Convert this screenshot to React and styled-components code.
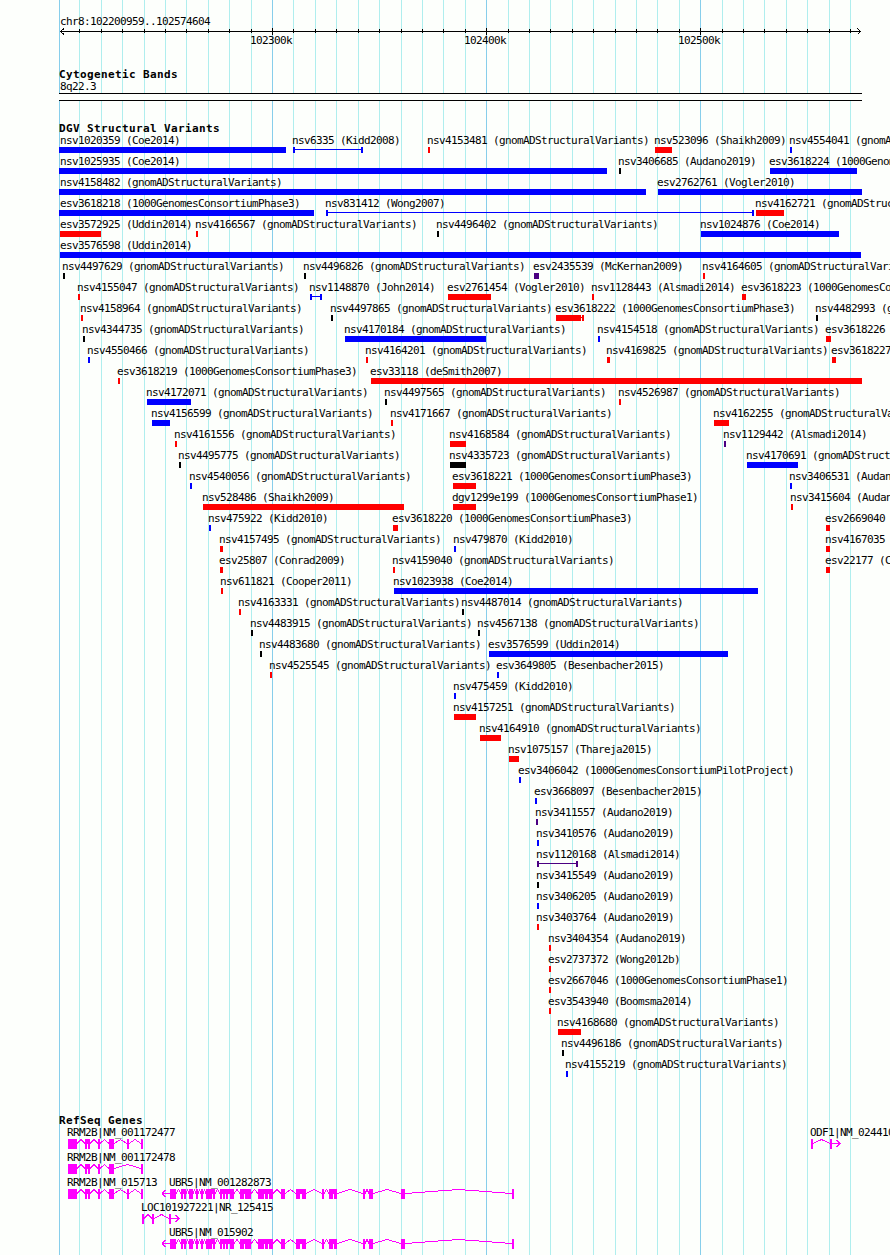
import React from "react";
import styled, { createGlobalStyle, css } from "styled-components";

const RED = "#ff0000";
const BLUE = "#0000ff";
const BLACK = "#000000";
const PURPLE = "#4b0082";
const GENE = "#ff00ff";

const GNOMAD = "gnomADStructuralVariants";
const PHASE1 = "1000GenomesConsortiumPhase1";
const PHASE3 = "1000GenomesConsortiumPhase3";
const PILOT = "1000GenomesConsortiumPilotProject";

const MAJOR = [59, 272, 486, 700];
const MINOR = [
	79, 101, 122, 144, 165, 186, 208, 229, 251, 293, 315, 336, 358, 379, 401, 422, 443, 465, 508,
	529, 550, 572, 593, 615, 636, 657, 679, 722, 743, 764, 786, 807, 829, 850
];

const rule = (color) => (x) => `linear-gradient(${color}, ${color}) ${x}px 0 / 1px 100% no-repeat`;
const gridLines = [...MAJOR.map(rule("#87ceeb")), ...MINOR.map(rule("#afeeee"))].join(", ");

// [name, study, start, end, color, kind, label start]
const variants = [
	[
		["nsv1020359", "Coe2014", 59, 286, BLUE, "bar", 61],
		["nsv6335", "Kidd2008", 293, 363, BLUE, "span"],
		["nsv4153481", GNOMAD, 428, 430, RED],
		["nsv523096", "Shaikh2009", 655, 672, RED],
		["nsv4554041", GNOMAD, 790, 792, BLUE]
	],
	[
		["nsv1025935", "Coe2014", 59, 607, BLUE, "bar", 61],
		["nsv3406685", "Audano2019", 619, 621, BLACK],
		["esv3618224", PHASE3, 770, 857, BLUE]
	],
	[
		["nsv4158482", GNOMAD, 59, 646, BLUE, "bar", 61],
		["esv2762761", "Vogler2010", 658, 862, BLUE]
	],
	[
		["esv3618218", PHASE3, 59, 314, BLUE, "bar", 61],
		["nsv831412", "Wong2007", 326, 754, BLUE, "span"],
		["nsv4162721", GNOMAD, 756, 784, RED]
	],
	[
		["esv3572925", "Uddin2014", 60, 101, RED, "bar", 61],
		["nsv4166567", GNOMAD, 196, 198, RED],
		["nsv4496402", GNOMAD, 437, 439, BLACK],
		["nsv1024876", "Coe2014", 701, 839, BLUE]
	],
	[["esv3576598", "Uddin2014", 60, 861, BLUE, "bar", 61]],
	[
		["nsv4497629", GNOMAD, 63, 65, BLACK],
		["nsv4496826", GNOMAD, 304, 306, BLACK],
		["esv2435539", "McKernan2009", 534, 539, PURPLE],
		["nsv4164605", GNOMAD, 703, 705, RED]
	],
	[
		["nsv4155047", GNOMAD, 78, 80, RED],
		["nsv1148870", "John2014", 310, 322, BLUE, "span"],
		["esv2761454", "Vogler2010", 448, 491, RED],
		["nsv1128443", "Alsmadi2014", 592, 594, RED],
		["esv3618223", PHASE3, 742, 746, RED]
	],
	[
		["nsv4158964", GNOMAD, 81, 83, RED],
		["nsv4497865", GNOMAD, 331, 333, BLACK],
		["esv3618222", PHASE3, 556, 584, RED, "split"],
		["nsv4482993", GNOMAD, 816, 818, BLACK]
	],
	[
		["nsv4344735", GNOMAD, 83, 85, BLACK],
		["nsv4170184", GNOMAD, 345, 486, BLUE],
		["nsv4154518", GNOMAD, 598, 600, BLUE],
		["esv3618226", PHASE3, 826, 831, RED]
	],
	[
		["nsv4550466", GNOMAD, 88, 90, BLUE],
		["nsv4164201", GNOMAD, 366, 368, RED],
		["nsv4169825", GNOMAD, 607, 610, RED],
		["esv3618227", PHASE3, 832, 836, RED]
	],
	[
		["esv3618219", PHASE3, 118, 120, RED],
		["esv33118", "deSmith2007", 371, 862, RED]
	],
	[
		["nsv4172071", GNOMAD, 147, 191, BLUE],
		["nsv4497565", GNOMAD, 385, 387, BLACK],
		["nsv4526987", GNOMAD, 619, 621, RED]
	],
	[
		["nsv4156599", GNOMAD, 152, 170, BLUE],
		["nsv4171667", GNOMAD, 391, 393, RED],
		["nsv4162255", GNOMAD, 714, 729, RED]
	],
	[
		["nsv4161556", GNOMAD, 175, 177, RED],
		["nsv4168584", GNOMAD, 450, 466, RED],
		["nsv1129442", "Alsmadi2014", 724, 726, PURPLE]
	],
	[
		["nsv4495775", GNOMAD, 179, 181, BLACK],
		["nsv4335723", GNOMAD, 450, 466, BLACK],
		["nsv4170691", GNOMAD, 747, 798, BLUE]
	],
	[
		["nsv4540056", GNOMAD, 190, 192, BLUE],
		["esv3618221", PHASE3, 453, 476, RED],
		["nsv3406531", "Audano2019", 790, 792, BLUE]
	],
	[
		["nsv528486", "Shaikh2009", 203, 404, RED],
		["dgv1299e199", PHASE1, 453, 476, RED],
		["nsv3415604", "Audano2019", 791, 793, RED]
	],
	[
		["nsv475922", "Kidd2010", 209, 211, BLUE],
		["esv3618220", PHASE3, 393, 398, RED],
		["esv2669040", PHASE1, 826, 830, RED]
	],
	[
		["nsv4157495", GNOMAD, 220, 223, RED],
		["nsv479870", "Kidd2010", 454, 456, BLUE],
		["nsv4167035", GNOMAD, 826, 830, RED]
	],
	[
		["esv25807", "Conrad2009", 220, 223, RED],
		["nsv4159040", GNOMAD, 393, 395, RED],
		["esv22177", "Conrad2009", 826, 830, RED]
	],
	[
		["nsv611821", "Cooper2011", 221, 223, RED],
		["nsv1023938", "Coe2014", 394, 758, BLUE]
	],
	[
		["nsv4163331", GNOMAD, 239, 241, RED],
		["nsv4487014", GNOMAD, 462, 464, BLACK]
	],
	[
		["nsv4483915", GNOMAD, 251, 253, BLACK],
		["nsv4567138", GNOMAD, 478, 480, BLACK]
	],
	[
		["nsv4483680", GNOMAD, 260, 262, BLACK],
		["esv3576599", "Uddin2014", 489, 728, BLUE]
	],
	[
		["nsv4525545", GNOMAD, 270, 272, RED],
		["esv3649805", "Besenbacher2015", 497, 499, BLUE]
	],
	[["nsv475459", "Kidd2010", 454, 456, BLUE]],
	[["nsv4157251", GNOMAD, 454, 476, RED]],
	[["nsv4164910", GNOMAD, 480, 501, RED]],
	[["nsv1075157", "Thareja2015", 509, 519, RED]],
	[["esv3406042", PILOT, 519, 521, BLUE]],
	[["esv3668097", "Besenbacher2015", 535, 537, BLUE]],
	[["nsv3411557", "Audano2019", 536, 538, PURPLE]],
	[["nsv3410576", "Audano2019", 537, 539, BLUE]],
	[["nsv1120168", "Alsmadi2014", 537, 578, PURPLE, "span"]],
	[["nsv3415549", "Audano2019", 537, 539, BLACK]],
	[["nsv3406205", "Audano2019", 537, 539, BLUE]],
	[["nsv3403764", "Audano2019", 537, 539, RED]],
	[["nsv3404354", "Audano2019", 549, 551, RED]],
	[["esv2737372", "Wong2012b", 549, 551, RED]],
	[["esv2667046", PHASE1, 549, 551, RED]],
	[["esv3543940", "Boomsma2014", 549, 551, RED]],
	[["nsv4168680", GNOMAD, 558, 581, RED]],
	[["nsv4496186", GNOMAD, 562, 564, BLACK]],
	[["nsv4155219", GNOMAD, 566, 568, BLUE]]
];

const RRM2B = [[68, 77], [85, 87], [88, 90], [98, 100], [109, 114], [127, 129], [141, 143]];
const RRM2B_SHORT = RRM2B.filter(([start]) => start !== 127);
const UBR5 = [
	[170, 176], [181, 183], [184, 186], [189, 193], [196, 198], [201, 203], [206, 212], [213, 215],
	[220, 222], [223, 225], [226, 228], [230, 234], [240, 244], [245, 251], [258, 264], [265, 268],
	[269, 273], [281, 285], [296, 300], [302, 306], [322, 324], [329, 333], [334, 337], [363, 365],
	[369, 373], [401, 405], [512, 514]
];

const genes = [
	[
		{ name: "RRM2B|NM_001172477", exons: RRM2B },
		{ name: "ODF1|NM_024410", exons: [[811, 813], [830, 832]], strand: 1 }
	],
	[{ name: "RRM2B|NM_001172478", exons: RRM2B_SHORT }],
	[
		{ name: "RRM2B|NM_015713", exons: RRM2B },
		{ name: "UBR5|NM_001282873", exons: UBR5, strand: -1 }
	],
	[{ name: "LOC101927221|NR_125415", exons: [[142, 144], [152, 154], [169, 171]], strand: 1 }],
	[{ name: "UBR5|NM_015902", exons: UBR5, strand: -1 }]
];

const GlobalStyle = createGlobalStyle`
	body {
		margin: 0;
		background: #fdfffc;
	}
`;

const Browser = styled.main`
	display: flex;
	flex-direction: column;
	box-sizing: border-box;
	width: 890px;
	height: 1255px;
	padding-top: 15px;
	overflow: hidden;
	color: #000;
	font: 11px/12px "DejaVu Sans Mono", monospace;
	letter-spacing: -0.622px;
	white-space: pre;
	background: ${gridLines};
`;

const Track = styled.section`
	flex: none;
	height: ${(p) => p.$height}px;
`;

const Title = styled.h2`
	margin: 0;
	padding-left: 59px;
	height: ${(p) => p.$height || 12}px;
	font-size: 11px;
	line-height: 14px;
	font-weight: bold;
	letter-spacing: 0.378px;
`;

const Caption = styled.div`
	padding-left: 60px;
	height: 13px;
	line-height: 14px;
`;

const Drawing = styled.svg`
	display: block;
	shape-rendering: crispEdges;
`;

const Scale = styled.div`
	display: grid;
	height: 12px;
	margin-top: -1px;
`;

const ScaleLabel = styled.span`
	grid-area: 1 / 1;
	margin-left: ${(p) => p.$x}px;
`;

const Band = styled.div`
	box-sizing: border-box;
	width: 803px;
	height: 8px;
	margin-left: 59px;
	border: solid #000;
	border-width: 1px 0;
	background: #fdfffc;
`;

const Row = styled.div`
	display: grid;
	height: ${(p) => p.$height}px;
`;

const Feature = styled.div`
	grid-area: 1 / 1;
	width: 0;
`;

const Label = styled.div`
	height: 12px;
`;

const Glyph = styled.div`
	box-sizing: border-box;
	height: 6px;
	${(p) =>
		p.$kind === "span"
			? css`
					border: solid ${p.$color};
					border-width: 0 2px;
					background: linear-gradient(${p.$color}, ${p.$color}) 0 2px / 100% 1px no-repeat;
			  `
			: css`
					background: ${p.$color};
			  `}
	${(p) =>
		p.$kind === "split" &&
		css`
			background:
				linear-gradient(${p.$color}, ${p.$color}) 0 2px / 100% 1px no-repeat,
				linear-gradient(90deg, ${p.$color} 25px, transparent 25px 26px, ${p.$color} 26px);
		`}
`;

const Variant = ({ data }) => {
	const [name, study, start, end, color, kind, labelStart = start] = data;
	return (
		<Feature style={{ marginLeft: start }}>
			<Label style={{ marginLeft: labelStart - start - 1 }}>{`${name} (${study})`}</Label>
			<Glyph $color={color} $kind={kind} style={{ width: end - start }} />
		</Feature>
	);
};

const Gene = ({ name, exons, strand }) => {
	const origin = strand === -1 ? exons[0][0] - 8 : exons[0][0];
	const last = exons[exons.length - 1][1];
	const introns = exons.slice(1).map(([start], i) => {
		const from = exons[i][1];
		return `M${from} 4.5L${(from + start) / 2} 0.5L${start} 4.5`;
	});
	return (
		<Feature style={{ marginLeft: origin }}>
			<Label style={{ marginLeft: exons[0][0] - origin - 1 }}>{name}</Label>
			<Drawing width={last + 9 - origin} height="10" viewBox={`${origin} 0 ${last + 9 - origin} 10`}>
				<g fill="none" stroke={GENE}>
					<path d={introns.join("")} />
					{strand === 1 && <path d={`M${last} 4.5h8m-3.5 -3.5l3.5 3.5l-3.5 3.5`} />}
					{strand === -1 && <path d={`M${origin + 8} 4.5h-8m3.5 -3.5l-3.5 3.5l3.5 3.5`} />}
				</g>
				{exons.map(([start, end]) => (
					<rect key={start} x={start} width={end - start} height="10" fill={GENE} />
				))}
			</Drawing>
		</Feature>
	);
};

const Ruler = () => (
	<Drawing width="890" height="8" viewBox="0 28 890 8">
		<path
			d="M60 31.5H861M64 28.5l-3.5 3l3.5 3M857.5 28.5l3 3l-3 3"
			fill="none"
			stroke="#000"
		/>
		{MINOR.map((x) => (
			<rect key={x} x={x} y="29" width="1" height="4" />
		))}
		{MAJOR.slice(1).map((x) => (
			<rect key={x} x={x} y="28" width="1" height="7" />
		))}
	</Drawing>
);

export default function App() {
	return (
		<>
			<GlobalStyle />
			<Browser>
				<Track $height={53}>
					<Caption>chr8:102200959..102574604</Caption>
					<Ruler />
					<Scale>
						<ScaleLabel $x={250}>102300k</ScaleLabel>
						<ScaleLabel $x={464}>102400k</ScaleLabel>
						<ScaleLabel $x={678}>102500k</ScaleLabel>
					</Scale>
				</Track>
				<Track $height={54}>
					<Title>Cytogenetic Bands</Title>
					<Caption>8q22.3</Caption>
					<Band />
				</Track>
				<Track $height={992}>
					<Title $height={13}>DGV Structural Variants</Title>
					{variants.map((row) => (
						<Row key={row[0][0]} $height={21}>
							{row.map((v) => (
								<Variant key={v[0]} data={v} />
							))}
						</Row>
					))}
				</Track>
				<Track $height={141}>
					<Title $height={13}>RefSeq Genes</Title>
					{genes.map((row) => (
						<Row key={row[0].name} $height={25}>
							{row.map((g) => (
								<Gene key={g.name} {...g} />
							))}
						</Row>
					))}
				</Track>
			</Browser>
		</>
	);
}
